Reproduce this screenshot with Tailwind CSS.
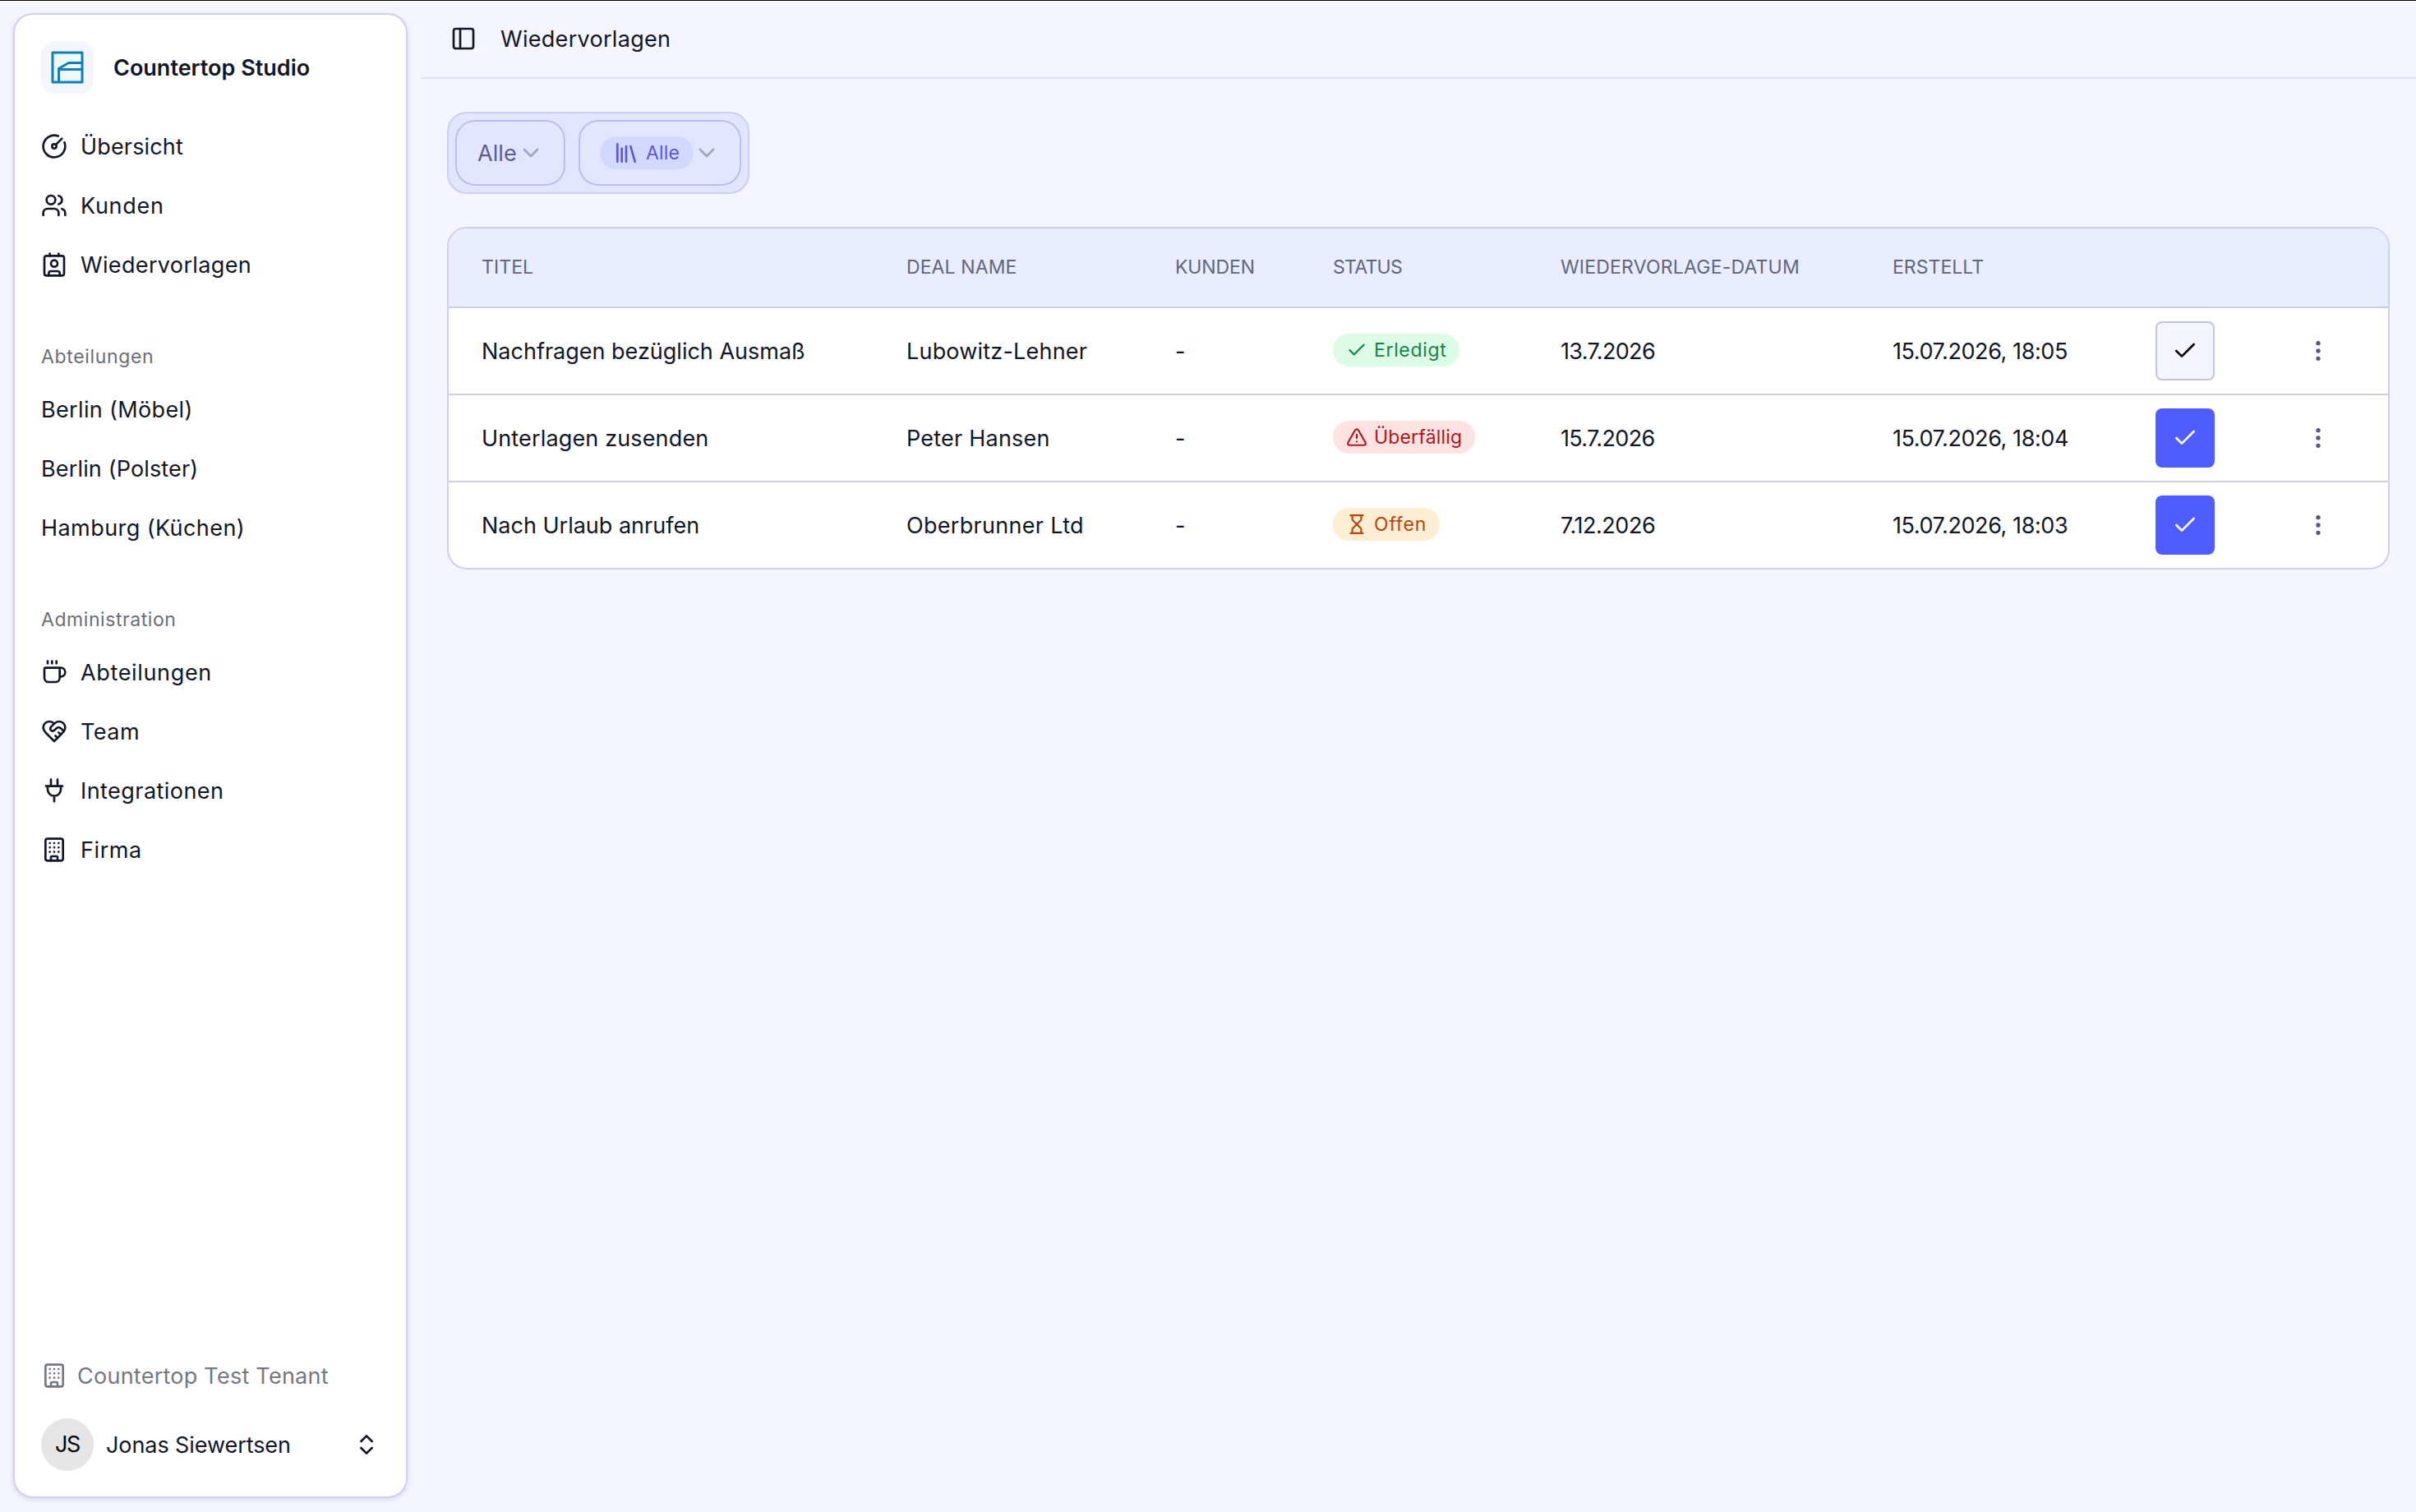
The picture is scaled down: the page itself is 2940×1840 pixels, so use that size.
<!DOCTYPE html>
<html lang="de">
<head>
<meta charset="utf-8">
<title>Wiedervorlagen</title>
<script src="https://cdn.jsdelivr.net/npm/@tailwindcss/browser@4"></script>
</head>
<body class="flex h-[1840px] w-[2940px] flex-col overflow-hidden bg-[#f4f5ff] font-['Inter',sans-serif] text-[27px] leading-10 font-[370] text-[#111628] whitespace-nowrap">
<svg class="hidden">
  <defs>
    <symbol id="check" viewBox="0 0 24 24"><path d="M20 6 9 17l-5-5"/></symbol>
    <symbol id="dots" viewBox="0 0 24 24"><circle cx="12" cy="12" r="1"/><circle cx="12" cy="5" r="1"/><circle cx="12" cy="19" r="1"/></symbol>
    <symbol id="down" viewBox="0 0 24 24"><path d="m6 9 6 6 6-6"/></symbol>
    <symbol id="building" viewBox="0 0 24 24"><path d="M12 10h.01M12 14h.01M12 6h.01M16 10h.01M16 14h.01M16 6h.01M8 10h.01M8 14h.01M8 6h.01M9 22v-3a1 1 0 0 1 1-1h4a1 1 0 0 1 1 1v3"/><rect x="4" y="2" width="16" height="20" rx="2"/></symbol>
  </defs>
</svg>
<div class="h-px shrink-0 bg-black"></div>
<div class="h-[2px] shrink-0 bg-[#fcfcff]"></div>
<div class="h-px shrink-0 bg-[#e9e9f5]"></div>
<div class="h-px shrink-0 bg-white"></div>
<div class="flex min-h-0 flex-1">
  <aside class="mt-[11px] mb-[17px] ml-4 flex w-[480px] shrink-0 flex-col rounded-[24px] border-2 border-[#cdcff6] bg-white p-4 pt-8 shadow-[0_2px_6px_rgba(60,60,120,0.14)]">
    <div class="flex h-16 items-center gap-6 px-4">
      <div class="flex size-16 items-center justify-center rounded-2xl bg-[#f5f5ff]">
        <svg class="size-10" viewBox="0 0 40 40" fill="#eef8ff" stroke="#117fb8" stroke-width="3" stroke-linejoin="round"><path d="M2 2h36v36H2z"/><path d="M9.500 38V21.500L21.500 14.500H38M9.500 22.500H38" fill="none"/></svg>
      </div>
      <span class="pt-0.5 font-semibold">Countertop Studio</span>
    </div>
    <nav class="mt-8 flex flex-col gap-12">
      <ul class="flex flex-col gap-2 [&_span]:pt-0.5">
        <li class="flex h-16 items-center gap-4 px-4">
          <svg class="size-8" viewBox="0 0 24 24" fill="none" stroke="currentColor" stroke-width="2" stroke-linecap="round" stroke-linejoin="round"><path d="M15.600 2.700a10 10 0 1 0 5.700 5.700"/><circle cx="12" cy="12" r="2"/><path d="M13.400 10.600 19 5"/></svg>
          <span class="tracking-[0.15px]">Übersicht</span></li>
        <li class="flex h-16 items-center gap-4 px-4">
          <svg class="size-8" viewBox="0 0 24 24" fill="none" stroke="currentColor" stroke-width="2" stroke-linecap="round" stroke-linejoin="round"><path d="M16 21v-2a4 4 0 0 0-4-4H6a4 4 0 0 0-4 4v2"/><circle cx="9" cy="7" r="4"/><path d="M22 21v-2a4 4 0 0 0-3-3.870M16 3.130a4 4 0 0 1 0 7.750"/></svg>
          <span class="tracking-[0.7px]">Kunden</span></li>
        <li class="flex h-16 items-center gap-4 px-4">
          <svg class="size-8" viewBox="0 0 24 24" fill="none" stroke="currentColor" stroke-width="2" stroke-linecap="round" stroke-linejoin="round"><path d="M16 2v2M8 2v2M7 22v-2a2 2 0 0 1 2-2h6a2 2 0 0 1 2 2v2"/><circle cx="12" cy="11" r="3"/><rect x="3" y="4" width="18" height="18" rx="2"/></svg>
          <span class="tracking-[0.35px]">Wiedervorlagen</span></li>
      </ul>
      <div>
        <div class="flex h-16 items-center px-4 text-[23px] tracking-[0.65px] text-[#6b6e78]">Abteilungen</div>
        <ul class="flex flex-col gap-2">
          <li class="flex h-16 items-center px-4 pt-0.5 tracking-[0.35px]">Berlin (Möbel)</li>
          <li class="flex h-16 items-center px-4 pt-0.5 tracking-[0.15px]">Berlin (Polster)</li>
          <li class="flex h-16 items-center px-4 pt-0.5 tracking-[0.43px]">Hamburg (Küchen)</li>
        </ul>
      </div>
      <div>
        <div class="flex h-16 items-center px-4 text-[23px] tracking-[0.57px] text-[#6b6e78]">Administration</div>
        <ul class="flex flex-col gap-2 [&_span]:pt-0.5">
          <li class="flex h-16 items-center gap-4 px-4">
            <svg class="size-8" viewBox="0 0 24 24" fill="none" stroke="currentColor" stroke-width="2" stroke-linecap="round" stroke-linejoin="round"><path d="M10 2v2M14 2v2M6 2v2M16 8a1 1 0 0 1 1 1v8a4 4 0 0 1-4 4H7a4 4 0 0 1-4-4V9a1 1 0 0 1 1-1h14a4 4 0 1 1 0 8h-1"/></svg>
            <span class="tracking-[0.65px]">Abteilungen</span></li>
          <li class="flex h-16 items-center gap-4 px-4">
            <svg class="size-8" viewBox="0 0 24 24" fill="none" stroke="currentColor" stroke-width="2" stroke-linecap="round" stroke-linejoin="round"><path d="M19 14c1.490-1.460 3-3.210 3-5.500A5.500 5.500 0 0 0 16.500 3c-1.760 0-3 .5-4.500 2-1.500-1.500-2.740-2-4.500-2A5.500 5.500 0 0 0 2 8.500c0 2.300 1.500 4.050 3 5.500l7 7Z"/><path d="M12 5 9.040 7.960a2.170 2.170 0 0 0 0 3.080c.82.820 2.130.850 3 .070l2.070-1.900a2.820 2.820 0 0 1 3.790 0l2.960 2.660M18 15l-2-2M15 18l-2-2"/></svg>
            <span class="tracking-[0.5px]">Team</span></li>
          <li class="flex h-16 items-center gap-4 px-4">
            <svg class="size-8" viewBox="0 0 24 24" fill="none" stroke="currentColor" stroke-width="2" stroke-linecap="round" stroke-linejoin="round"><path d="M12 22v-5M9 8V2M15 8V2M4.500 8h15M18 8v3a6 6 0 0 1-12 0V8"/></svg>
            <span class="tracking-[0.45px]">Integrationen</span></li>
          <li class="flex h-16 items-center gap-4 px-4">
            <svg class="size-8" fill="none" stroke="currentColor" stroke-width="2" stroke-linecap="round" stroke-linejoin="round"><use href="#building"/></svg>
            <span class="tracking-[0.6px]">Firma</span></li>
        </ul>
      </div>
    </nav>
    <div class="mt-auto mb-[15px] flex flex-col gap-8">
      <div class="flex h-10 items-center gap-3 px-4 text-[#757883]">
        <svg class="size-8" fill="none" stroke="currentColor" stroke-width="2" stroke-linecap="round" stroke-linejoin="round"><use href="#building"/></svg>
        <span class="pt-0.5 tracking-[0.25px]">Countertop Test Tenant</span>
      </div>
      <div class="flex h-16 items-center px-4">
        <div class="flex size-16 items-center justify-center rounded-full bg-[#e5e5e5] text-[27px] tracking-[-1.3px] text-black">JS</div>
        <span class="ml-[15px] pt-px tracking-[-0.08px]">Jonas Siewertsen</span>
        <svg class="ml-auto size-8" viewBox="0 0 24 24" fill="none" stroke="currentColor" stroke-width="2" stroke-linecap="round" stroke-linejoin="round"><path d="m7 15 5 5 5-5M7 9l5-5 5 5"/></svg>
      </div>
    </div>
  </aside>

  <main class="ml-4 flex min-w-0 flex-1 flex-col">
    <header class="flex h-[91px] shrink-0 items-center border-b-2 border-[#dde1fb] pb-[5px] pl-9">
      <svg class="size-8" viewBox="0 0 24 24" fill="none" stroke="currentColor" stroke-width="2" stroke-linecap="round" stroke-linejoin="round"><rect x="3" y="3" width="18" height="18" rx="2"/><path d="M9 3v18"/></svg>
      <h1 class="ml-[29px] pt-0.5 tracking-[0.3px]">Wiedervorlagen</h1>
    </header>

    <div class="mt-10 ml-8 flex h-[100px] w-[368px] items-center justify-between rounded-[24px] border-2 border-[#cbcef5] bg-[#e3e6ff] px-2">
      <button class="flex h-20 w-[134px] items-center rounded-[24px] border-2 border-[#bbbef0] pl-[25px] text-[#5b5c98]">
        <span class="pt-0.5 tracking-[0.1px]">Alle</span>
        <svg class="ml-px size-8 text-[#a2a2cd]" fill="none" stroke="currentColor" stroke-width="2" stroke-linecap="round" stroke-linejoin="round"><use href="#down"/></svg>
      </button>
      <button class="flex h-20 w-[198px] items-center rounded-[24px] border-2 border-[#bbbef0] pl-6">
        <span class="flex h-10 w-[114px] items-center gap-2 rounded-full bg-[#d3d8ff] px-4 text-[23px] text-[#5b57d9]">
          <svg class="size-8 shrink-0" viewBox="0 0 24 24" fill="none" stroke="currentColor" stroke-width="2" stroke-linecap="round" stroke-linejoin="round"><path d="m16 6 4 14M12 6v14M8 8v12M4 4v16"/></svg>
          <span class="tracking-[0.2px]">Alle</span>
        </span>
        <svg class="size-8 text-[#a2a2cd]" fill="none" stroke="currentColor" stroke-width="2" stroke-linecap="round" stroke-linejoin="round"><use href="#down"/></svg>
      </button>
    </div>

    <section class="mt-10 mr-8 ml-8 flex flex-col overflow-hidden rounded-[24px] border-2 border-[#cdd0f0] bg-white">
      <div class="grid h-[97px] grid-cols-[517px_327px_192px_277px_404px_320px_152px_1fr] items-center border-b-2 border-[#c9cee9] bg-[#e9edff] pb-px text-[23px] text-[#62667a] *:pl-10">
        <div class="tracking-[0.1px]">TITEL</div>
        <div class="tracking-[0.1px]">DEAL NAME</div>
        <div class="tracking-[-0.1px]">KUNDEN</div>
        <div class="tracking-[-0.7px]">STATUS</div>
        <div class="tracking-[0.2px]">WIEDERVORLAGE-DATUM</div>
        <div class="tracking-[0.05px]">ERSTELLT</div>
      </div>
      <div class="grid h-[106px] grid-cols-[517px_327px_192px_277px_404px_320px_152px_1fr] items-center border-b-2 border-[#cfd0e2] *:pl-10">
        <div class="pt-0.5">Nachfragen bezüglich Ausmaß</div>
        <div class="pt-0.5 tracking-[0.2px]">Lubowitz-Lehner</div>
        <div class="pt-0.5">-</div>
        <div class="flex pb-0.5"><span class="flex h-10 items-center gap-2 rounded-full bg-[#dcfce7] px-4 text-[23px] tracking-[0.65px] text-[#138545]"><svg class="size-[26px]" fill="none" stroke="currentColor" stroke-width="2" stroke-linecap="round" stroke-linejoin="round"><use href="#check"/></svg>Erledigt</span></div>
        <div class="pt-0.5 tracking-[-0.65px]">13.7.2026</div>
        <div class="pt-0.5 tracking-[-0.42px]">15.07.2026, 18:05</div>
        <div><button class="flex size-[72px] items-center justify-center rounded-lg border-2 border-[#bec5e6] bg-[#f4f5ff] text-black"><svg class="size-8" fill="none" stroke="currentColor" stroke-width="2" stroke-linecap="round" stroke-linejoin="round"><use href="#check"/></svg></button></div>
        <div class="text-[#55568f]"><svg class="ml-[30px] size-8" fill="none" stroke="currentColor" stroke-width="2"><use href="#dots"/></svg></div>
      </div>
      <div class="grid h-[106px] grid-cols-[517px_327px_192px_277px_404px_320px_152px_1fr] items-center border-b-2 border-[#cfd0e2] *:pl-10">
        <div class="pt-0.5 tracking-[0.15px]">Unterlagen zusenden</div>
        <div class="pt-0.5 tracking-[0.22px]">Peter Hansen</div>
        <div class="pt-0.5">-</div>
        <div class="flex pb-0.5"><span class="flex h-10 items-center gap-2 rounded-full bg-[#ffe2e2] px-4 text-[23px] tracking-[0.17px] text-[#b5141f]"><svg class="size-[26px]" viewBox="0 0 24 24" fill="none" stroke="currentColor" stroke-width="2" stroke-linecap="round" stroke-linejoin="round"><path d="m21.730 18-8-14a2 2 0 0 0-3.480 0l-8 14A2 2 0 0 0 4 21h16a2 2 0 0 0 1.730-3M12 9v4M12 17h.01"/></svg>Überfällig</span></div>
        <div class="pt-0.5 tracking-[-0.65px]">15.7.2026</div>
        <div class="pt-0.5 tracking-[-0.42px]">15.07.2026, 18:04</div>
        <div><button class="flex size-[72px] items-center justify-center rounded-lg bg-[#4f5dff] text-white"><svg class="size-8" fill="none" stroke="currentColor" stroke-width="2" stroke-linecap="round" stroke-linejoin="round"><use href="#check"/></svg></button></div>
        <div class="text-[#55568f]"><svg class="ml-[30px] size-8" fill="none" stroke="currentColor" stroke-width="2"><use href="#dots"/></svg></div>
      </div>
      <div class="grid h-[104px] grid-cols-[517px_327px_192px_277px_404px_320px_152px_1fr] items-center *:pl-10">
        <div class="pt-0.5">Nach Urlaub anrufen</div>
        <div class="pt-0.5 tracking-[0.3px]">Oberbrunner Ltd</div>
        <div class="pt-0.5">-</div>
        <div class="flex pb-0.5"><span class="flex h-10 items-center gap-2 rounded-full bg-[#ffedd4] px-4 text-[23px] tracking-[0.8px] text-[#c04309]"><svg class="size-[26px]" viewBox="0 0 24 24" fill="none" stroke="currentColor" stroke-width="2" stroke-linecap="round" stroke-linejoin="round"><path d="M5 22h14M5 2h14M17 22v-4.172a2 2 0 0 0-.586-1.414L12 12l-4.414 4.414A2 2 0 0 0 7 17.828V22M7 2v4.172a2 2 0 0 0 .586 1.414L12 12l4.414-4.414A2 2 0 0 0 17 6.172V2"/></svg>Offen</span></div>
        <div class="pt-0.5 tracking-[-0.45px]">7.12.2026</div>
        <div class="pt-0.5 tracking-[-0.42px]">15.07.2026, 18:03</div>
        <div><button class="flex size-[72px] items-center justify-center rounded-lg bg-[#4f5dff] text-white"><svg class="size-8" fill="none" stroke="currentColor" stroke-width="2" stroke-linecap="round" stroke-linejoin="round"><use href="#check"/></svg></button></div>
        <div class="text-[#55568f]"><svg class="ml-[30px] size-8" fill="none" stroke="currentColor" stroke-width="2"><use href="#dots"/></svg></div>
      </div>
    </section>
  </main>
</div>
</body>
</html>
